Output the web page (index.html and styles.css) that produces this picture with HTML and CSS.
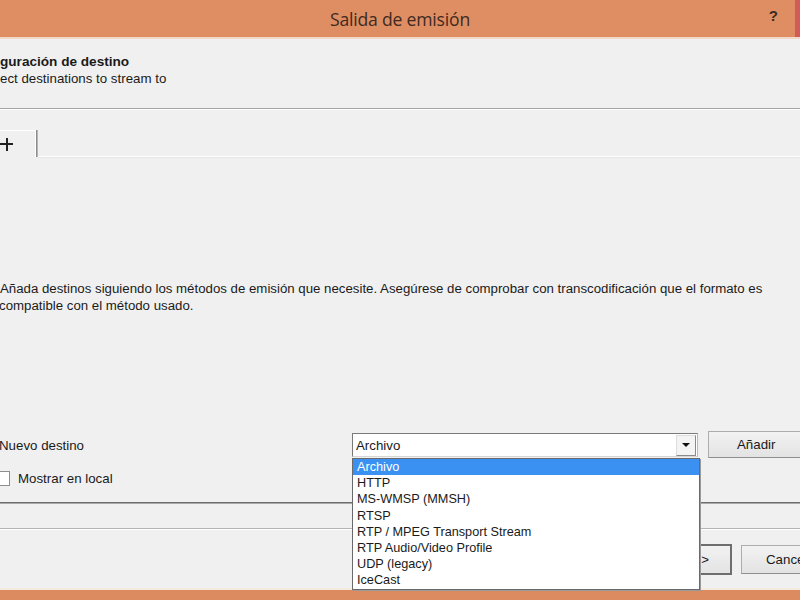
FILE: index.html
```html
<!DOCTYPE html>
<html lang="es">
<head>
<meta charset="utf-8">
<title>Salida de emisión</title>
<link rel="stylesheet" href="styles.css">
</head>
<body>
<div class="window">
  <header class="titlebar">
    <div class="tb-side"></div>
    <div class="tb-title">Salida de emisión</div>
    <div class="tb-side tb-right"><span class="tb-help">?</span><span class="tb-close"></span></div>
  </header>
  <div class="content">
    <div class="page-head">
      <div class="head-title">guración de destino</div>
      <div class="head-sub">ect destinations to stream to</div>
    </div>
    <div class="separator"></div>
    <div class="tabbar">
      <div class="tab"><span class="plus"></span></div>
      <div class="tab-fill"></div>
    </div>
    <div class="pane">
      <p class="message">Añada destinos siguiendo los métodos de emisión que necesite. Asegúrese de comprobar con transcodificación que el formato es<br><span class="cut">compatible con el método usado.</span></p>
      <div class="dest-row">
        <div class="dest-label">Nuevo destino</div>
        <div class="combo">
          <span class="combo-value">Archivo</span>
          <span class="combo-btn"><span class="tri"></span></span>
          <ul class="dropdown">
            <li class="sel">Archivo</li>
            <li>HTTP</li>
            <li>MS-WMSP (MMSH)</li>
            <li>RTSP</li>
            <li>RTP / MPEG Transport Stream</li>
            <li>RTP Audio/Video Profile</li>
            <li>UDP (legacy)</li>
            <li>IceCast</li>
          </ul>
        </div>
        <div class="btn add-btn">Añadir</div>
      </div>
      <div class="check-row">
        <span class="checkbox"></span>
        <span class="check-label">Mostrar en local</span>
      </div>
    </div>
    <div class="rule-dark"></div>
    <div class="rule-light"></div>
    <div class="button-row">
      <div class="btn next-btn">Siguiente &gt;</div>
      <div class="btn cancel-btn">Cancelar</div>
    </div>
  </div>
  <footer class="bottombar"></footer>
</div>
</body>
</html>
```
FILE: styles.css
```css
html, body {
  margin: 0;
  padding: 0;
}
body {
  width: 800px;
  height: 600px;
  overflow: hidden;
  background: #f0f0f0;
  font-family: "Liberation Sans", Arial, sans-serif;
  color: #1a1a1a;
}
.window {
  display: flex;
  flex-direction: column;
  height: 600px;
}
.titlebar {
  height: 37px;
  flex: none;
  background: #df8e64;
  border-bottom: 2px solid #f2d8c8;
  display: grid;
  grid-template-columns: 1fr auto 1fr;
  align-items: center;
}
.tb-title {
  font-family: "Open Sans", "Noto Sans", sans-serif;
  font-size: 17.6px;
  color: #3e2a20;
  letter-spacing: -0.2px;
}
.tb-right {
  display: flex;
  justify-content: flex-end;
  align-items: center;
  height: 37px;
}
.tb-help {
  font-family: "Liberation Sans", Arial, sans-serif;
  font-weight: bold;
  font-size: 15px;
  color: #3a2a22;
  margin-right: 17px;
  margin-top: -7px;
}
.tb-close {
  width: 5px;
  height: 37px;
  background: #d25a57;
}
.content {
  flex: 1;
  display: flex;
  flex-direction: column;
  font-size: 13.3px;
}
.page-head {
  padding-top: 14px;
  line-height: 17px;
}
.head-title {
  font-weight: bold;
  font-size: 13.6px;
}
.head-sub {
  font-size: 13.3px;
}
.separator {
  margin-top: 21px;
  border-top: 1px solid #a3a3a3;
  border-bottom: 1px solid #ffffff;
}
.tabbar {
  margin-top: 20px;
  display: flex;
  height: 27px;
}
.tab {
  width: 35px;
  border-top: 1px solid #ffffff;
  border-right: 1px solid #ffffff;
  box-shadow: 1px 0 0 #8c8c8c, 2px 0 0 #b5b5b5;
  display: flex;
  align-items: center;
}
.plus {
  display: block;
  width: 13px;
  height: 13px;
  background:
    linear-gradient(#222, #222) center / 13px 2px no-repeat,
    linear-gradient(#222, #222) center / 2px 13px no-repeat;
}
.tab-fill {
  flex: 1;
  margin-left: 2px;
  border-bottom: 1px solid #ffffff;
  box-shadow: 0 1px 0 #e6e6e6;
}
.pane {
  display: flex;
  flex-direction: column;
}
.message {
  margin: 123px 0 0 0;
  line-height: 17px;
  font-size: 13.25px;
  white-space: nowrap;
}
.cut {
  margin-left: -1px;
}
.dest-row {
  margin-top: 117px;
  display: flex;
  align-items: center;
  height: 27px;
}
.dest-label {
  width: 353px;
  margin-left: -1px;
  flex: none;
  margin-top: 2px;
}
.combo {
  position: relative;
  width: 344px;
  height: 22px;
  flex: none;
  margin-top: 1px;
  background: #ffffff;
  border: 1px solid #7a7a7a;
  border-right-color: #b9b9b9;
  border-bottom-color: #d6d6d6;
  display: flex;
  align-items: center;
}
.combo-value {
  flex: 1;
  padding-left: 3px;
}
.combo-btn {
  width: 18px;
  height: 19px;
  margin-right: 1px;
  border: 1px solid #dcdcdc;
  border-right-color: #8a8a8a;
  border-bottom-color: #8a8a8a;
  background: #f4f4f4;
  display: flex;
  align-items: center;
  justify-content: center;
}
.tri {
  width: 0;
  height: 0;
  border-left: 4px solid transparent;
  border-right: 4px solid transparent;
  border-top: 4px solid #111;
}
.dropdown {
  position: absolute;
  left: -1px;
  top: 24px;
  width: 346px;
  height: 130px;
  margin: 0;
  padding: 0;
  list-style: none;
  background: #ffffff;
  border: 1px solid #6a6a6a;
  box-shadow: 1px 1px 0 #9a9a9a;
  font-size: 12.7px;
  z-index: 5;
}
.dropdown li {
  height: 16.2px;
  line-height: 16px;
  padding-left: 4px;
  white-space: nowrap;
}
.dropdown li.sel {
  background: #3a91f2;
  color: #ffffff;
}
.btn {
  box-sizing: border-box;
  display: flex;
  align-items: center;
  justify-content: center;
  border: 1px solid #adadad;
  border-bottom-color: #8f8f8f;
  background: linear-gradient(#f2f2f2, #e3e3e3);
  font-size: 13.3px;
  white-space: nowrap;
}
.add-btn {
  margin-left: 10px;
  width: 100px;
  height: 27px;
  flex: none;
  justify-content: flex-start;
  padding-left: 28px;
}
.check-row {
  margin-top: 12px;
  display: flex;
  align-items: center;
  height: 16px;
}
.checkbox {
  box-sizing: border-box;
  width: 14px;
  height: 15px;
  margin-left: -4px;
  border: 1px solid #8e8e8e;
  background: #ffffff;
}
.check-label {
  margin-left: 8px;
}
.rule-dark {
  margin-top: 16px;
  border-top: 1px solid #6f6f6f;
  border-bottom: 1px solid #a9a9a9;
}
.rule-light {
  margin-top: 24px;
  border-top: 1px solid #b4b4b4;
  border-bottom: 1px solid #ffffff;
}
.button-row {
  margin-top: 14px;
  display: flex;
  justify-content: flex-end;
  gap: 9px;
  margin-right: -40px;
}
.next-btn {
  width: 113px;
  height: 31px;
  border: 2px solid #6e6e6e;
}
.cancel-btn {
  width: 99px;
  height: 29px;
  margin-top: 1px;
  justify-content: flex-start;
  padding-left: 24px;
}
.bottombar {
  height: 10px;
  flex: none;
  background: #dc8a5f;
  border-top: 2px solid #f6e9de;
  margin-top: auto;
}
```
